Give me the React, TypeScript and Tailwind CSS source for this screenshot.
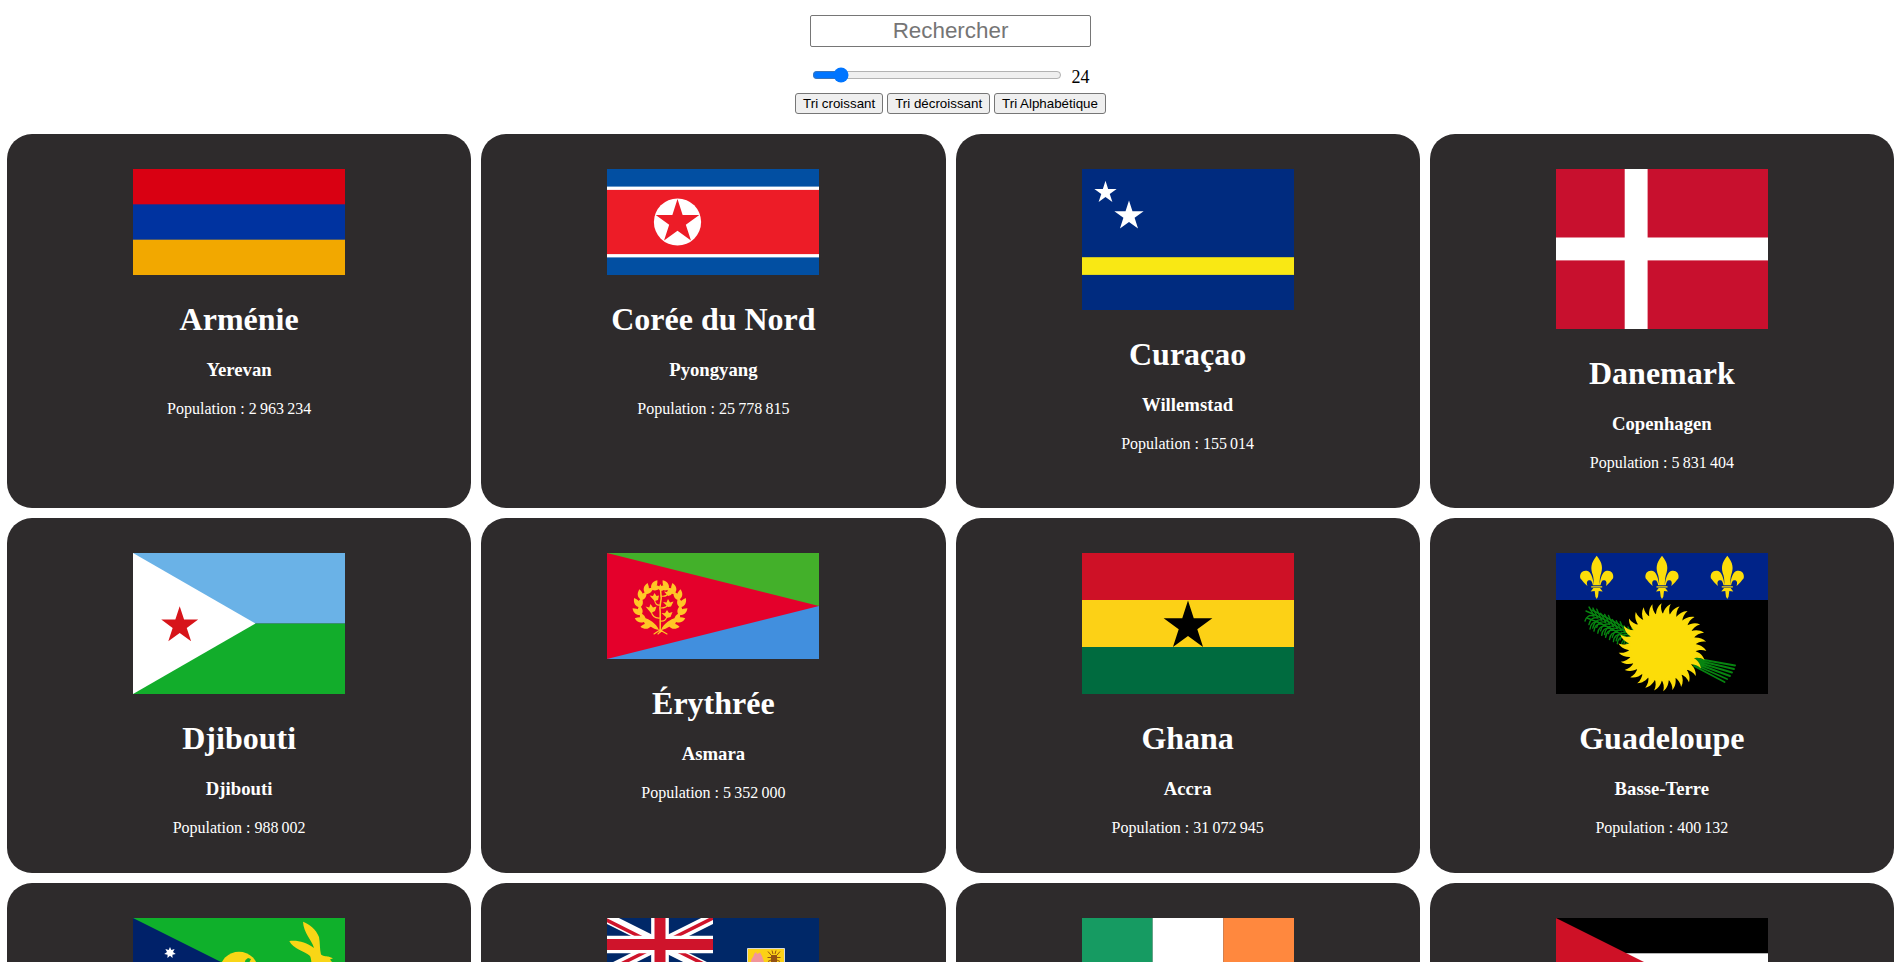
import { useState, type ReactNode } from "react";

function star(cx: number, cy: number, r: number, points = 5, inner = 0.382) {
  const out: string[] = [];
  for (let i = 0; i < points * 2; i++) {
    const a = (Math.PI * i) / points - Math.PI / 2;
    const d = i % 2 === 0 ? r : r * inner;
    out.push(`${(cx + d * Math.cos(a)).toFixed(2)},${(cy + d * Math.sin(a)).toFixed(2)}`);
  }
  return out.join(" ");
}

function Flag({ h, children }: { h: number; children: ReactNode }) {
  return (
    <svg className="block w-[212px] shrink-0" width={212} height={h} viewBox={`0 0 212 ${h}`}>
      {children}
    </svg>
  );
}

const Armenia = () => (
  <Flag h={106}>
    <rect width="212" height="106" fill="#d90012" />
    <rect y="35.33" width="212" height="70.67" fill="#0033a0" />
    <rect y="70.67" width="212" height="35.33" fill="#f2a800" />
  </Flag>
);

const NorthKorea = () => (
  <Flag h={106}>
    <rect width="212" height="106" fill="#024fa2" />
    <rect y="17.6" width="212" height="70.8" fill="#fff" />
    <rect y="20.9" width="212" height="64.2" fill="#ed1c27" />
    <circle cx="70.5" cy="53" r="23.6" fill="#fff" />
    <polygon points={star(70.5, 53, 22.9)} fill="#ed1c27" />
  </Flag>
);

const Curacao = () => (
  <Flag h={141}>
    <rect width="212" height="141" fill="#002b7f" />
    <rect y="88.2" width="212" height="17.7" fill="#f9e814" />
    <polygon points={star(23.5, 23.5, 11.7)} fill="#fff" />
    <polygon points={star(47, 47, 15.4)} fill="#fff" />
  </Flag>
);

const Denmark = () => (
  <Flag h={160}>
    <rect width="212" height="160" fill="#c8102e" />
    <rect x="68.7" width="22.9" height="160" fill="#fff" />
    <rect y="68.5" width="212" height="22.9" fill="#fff" />
  </Flag>
);

const Djibouti = () => (
  <Flag h={141}>
    <rect width="212" height="70.6" fill="#6ab2e7" />
    <rect y="70.6" width="212" height="70.4" fill="#12ad2b" />
    <polygon points="0,0 122.5,70.6 0,141" fill="#fff" />
    <polygon points={star(46.7, 72.6, 19.4)} fill="#d7141a" />
  </Flag>
);

const LEAF = "M0 1C-3.4 -1 -3.8 -5 -0.6 -10C3.4 -6.5 3.4 -2 0 1Z";

function Eritrea() {
  const leaves = [];
  for (let i = 0; i < 7; i++) {
    const t = 152 - i * 21.5;
    leaves.push(
      <g key={i} transform={`rotate(${180 + t}) translate(0 20.5)`}>
        <path d={LEAF} transform="rotate(128)" />
        <path d={LEAF} transform="rotate(80) scale(0.9)" />
      </g>,
    );
  }
  return (
    <Flag h={106}>
      <rect width="212" height="53" fill="#43b02a" />
      <rect y="53" width="212" height="53" fill="#418fde" />
      <polygon points="0,0 212,53 0,106" fill="#e4002b" />
      <g fill="#ffc726">
        <g transform="translate(53 54.5)">{leaves}</g>
        <g transform="translate(53 54.5) scale(-1 1)">{leaves}</g>
        <path d="M37.5 65C42 66 49 70 52 77C46 76 39 72 37.5 65ZM68.5 65C64 66 57 70 54 77C60 76 67 72 68.5 65Z" />
        <g fill="none" stroke="#ffc726" strokeLinecap="round" strokeWidth="1.1">
          <path d="M53.2 79V59C52 54 54 50 54.2 45L53.5 36" strokeWidth="1.5" />
          <path d="M53.2 65Q46 66 44 58M53.2 68Q59 69 60 63M53.2 52Q48 53 47.5 46M54 55Q60 55 61 51M54 43Q60 44 61 40M47 81L53 77L60 81M51 81L55 77" />
        </g>
        <path d="M44 60L38.5 53.5L42.2 54.5L43.5 51L46 54.5L49.5 53.5L48 58ZM60 65L54.5 60L58 60.2L60 57L62 60L65.5 59L63.5 64ZM47.5 48L42.6 42.5L46 43L47.5 40L49.5 43L52 42.5L51 47ZM61 54L56 49L59.5 49.5L61 46L63 49.5L66.5 48.5L64 53.5ZM61 43L57 38.5L60 39L61.5 36L63 39L66 38.5L64 42ZM53.5 38L49.5 34L52 34.3L53.3 31L55 34.2L57.3 34L56 37.5Z" />
      </g>
    </Flag>
  );
}

const Ghana = () => (
  <Flag h={141}>
    <rect width="212" height="47" fill="#ce1126" />
    <rect y="47" width="212" height="47" fill="#fcd116" />
    <rect y="94" width="212" height="47" fill="#006b3f" />
    <polygon points={star(106, 73.2, 25.6)} fill="#000" />
  </Flag>
);

const FLEUR =
  "M0 -21.5C-6 -14 -6.4 -9 -3.8 -2C-3 1 -3 4 -2.7 8H-3.8C-4.5 5 -5 3 -7 3C-9.5 3 -10.5 5 -9.3 8.6C-12.5 6 -14 4 -16.4 1C-17.5 -4 -14 -7.3 -10 -6.5C-5.5 -5.5 -4 0 -2.7 8H2.7C4 0 5.5 -5.5 10 -6.5C14 -7.3 17.5 -4 16.4 1C14 4 12.5 6 9.3 8.6C10.5 5 9.5 3 7 3C5 3 4.5 5 3.8 8H2.7C3 4 3 1 3.8 -2C6.4 -9 6 -14 0 -21.5Z";

function Guadeloupe() {
  const rays = Array.from({ length: 30 }, (_, i) => (
    <path
      key={i}
      d="M-4.2 -32C-3.8 -37 -2 -41.2 2.2 -44C0.8 -40 1.2 -36 3.4 -32Z"
      transform={`rotate(${i * 12 - 4})`}
    />
  ));
  const fronds = Array.from({ length: 12 }, (_, i) => {
    const x = 30 + i * 3.9;
    const y = 59 + i * 2.1;
    return (
      <path
        key={i}
        d={`M${x + 8} ${y + 4}Q${x + 5} ${y - 2} ${x + 3} ${y - 5 - (i % 3)}M${x + 8} ${y + 4}Q${x + 1} ${y + 2} ${x - 1} ${y + 9 + (i % 3) * 1.5}M${x + 12} ${y + 10}Q${x + 5} ${y + 9} ${x + 4} ${y + 17}`}
      />
    );
  });
  return (
    <Flag h={141}>
      <rect width="212" height="141" fill="#000" />
      <rect width="212" height="47" fill="#002388" />
      {[40.7, 106, 171.3].map((x) => (
        <g key={x} transform={`translate(${x} 24.3)`} fill="#fcdd09">
          <path d={FLEUR} />
          <path d="M-5.5 8.9H5.5V10.1H-5.5ZM-3.3 10.8H3.3L6 14.3L2 13.6L1.3 19.5L0 21.8L-1.3 19.5L-2 13.6L-6 14.3Z" />
        </g>
      ))}
      <g fill="none" stroke="#078410" strokeWidth="1.4" strokeLinecap="round">
        <path d="M30 58Q50 66 78 84M36 57Q54 66 78 80M31 65Q52 72 76 88" />
        {fronds}
        <path
          d="M137 105L179 112.5M137 106.5L178 116M137 108L176 119.5M137 109.5L174 123M137 111L171 126M138 113L168.5 129"
          strokeWidth="1.9"
        />
      </g>
      <g transform="translate(106.4 94.2)" fill="#fcdd09">
        <circle r="33.6" />
        {rays}
      </g>
    </Flag>
  );
}

const ChristmasIsland = () => (
  <Flag h={106}>
    <rect width="212" height="106" fill="#0fb02b" />
    <polygon points="0,0 212,106 0,106" fill="#002169" />
    <polygon points={star(37, 34.8, 5.9, 7, 0.52)} fill="#fff" />
    <circle cx="106" cy="53" r="19.3" fill="#f9d616" />
    <path d="M112.5 42L115 40L118 41L116.5 44L119 47L110 50Z" fill="#0fb02b" />
    <path
      d="M170 3.7C176 6 183 11 186 19C187.2 25 186.6 31 188 36.5C191 39 194 38 196 38.7L200 40.3L197 41.6L199 44L196 50H180C178 46 178.500 41 177 38C172 33 160 31 156.300 23C164 21.800 173 24 181 30C179 22 170.500 15 170 3.700Z"
      fill="#f9d616"
    />
  </Flag>
);

const TurksAndCaicos = () => (
  <Flag h={106}>
    <rect width="212" height="106" fill="#002868" />
    <svg width="106" height="53" viewBox="0 0 106 53">
      <path d="M0 0L106 53M106 0L0 53" stroke="#fff" strokeWidth="10.6" />
      <path d="M-2 1.3L51 27.8M106 0L53 26.5M53 26.5L0 53M55 25.2L108 51.7" stroke="#cf142b" strokeWidth="3.5" />
      <path d="M53 0V53M0 26.5H106" stroke="#fff" strokeWidth="17.7" />
      <path d="M53 0V53M0 26.5H106" stroke="#cf142b" strokeWidth="11" />
    </svg>
    <path d="M140.5 30.5H177.5V62Q175 76 159 82Q143 76 140.5 62Z" fill="#fcd116" stroke="#d5d8dc" />
    <path d="M144 44C144 40 147 39 147 36L149 34L150 36L153 34.5L155 38L157 44Z" fill="#f0959b" />
    <path d="M164 44V37H170V44Z" fill="#945312" />
    <path
      d="M164 37L161 33.5M170 37L173 33.5M166 36L165 32.5M168 36L169 32.5M164 39.5H160.5M170 39.5H173.5M164 42L161 43.5M170 42L173 43.5"
      stroke="#945312"
      strokeWidth="1"
    />
  </Flag>
);

const Ireland = () => (
  <Flag h={106}>
    <rect width="70.67" height="106" fill="#169b62" />
    <rect x="70.67" width="70.67" height="106" fill="#fff" />
    <rect x="141.33" width="70.67" height="106" fill="#ff883e" />
  </Flag>
);

const Jordan = () => (
  <Flag h={106}>
    <rect width="212" height="35.33" fill="#000" />
    <rect y="35.33" width="212" height="35.33" fill="#fff" />
    <rect y="70.67" width="212" height="35.33" fill="#007a3d" />
    <polygon points="0,0 106,53 0,106" fill="#ce1126" />
  </Flag>
);

const countries = [
  { name: "Arménie", capital: "Yerevan", population: 2963234, Picture: Armenia },
  { name: "Corée du Nord", capital: "Pyongyang", population: 25778815, Picture: NorthKorea },
  { name: "Curaçao", capital: "Willemstad", population: 155014, Picture: Curacao },
  { name: "Danemark", capital: "Copenhagen", population: 5831404, Picture: Denmark },
  { name: "Djibouti", capital: "Djibouti", population: 988002, Picture: Djibouti },
  { name: "Érythrée", capital: "Asmara", population: 5352000, Picture: Eritrea },
  { name: "Ghana", capital: "Accra", population: 31072945, Picture: Ghana },
  { name: "Guadeloupe", capital: "Basse-Terre", population: 400132, Picture: Guadeloupe },
];

const nextRow = [ChristmasIsland, TurksAndCaicos, Ireland, Jordan];

const sorts = ["Tri croissant", "Tri décroissant", "Tri Alphabétique"];

export default function App() {
  const [count, setCount] = useState(24);
  return (
    <div className="h-[962px] overflow-hidden bg-white font-['Liberation_Serif',serif] text-black">
      <header className="flex h-[134px] flex-col items-center pt-[15px]">
        <input
          type="text"
          placeholder="Rechercher"
          className="h-8 w-[281px] shrink-0 rounded-[2px] border border-[#767676] bg-white text-center font-['Liberation_Sans',sans-serif] text-[22.4px] outline-none placeholder:text-[#757575]"
        />
        <div className="mt-[17px] flex h-[25px] shrink-0 items-start">
          <input
            type="range"
            min={1}
            max={250}
            value={count}
            onChange={(e) => setCount(Number(e.target.value))}
            className="mt-[3px] h-4 w-[250px]"
          />
          <span className="ml-[10px] pt-px text-[18px] leading-[25px]">{count}</span>
        </div>
        <div className="mt-1 flex gap-1">
          {sorts.map((label) => (
            <button
              key={label}
              className="h-[21px] rounded-[3px] border border-[#767676] bg-[#efefef] px-[7px] font-['Liberation_Sans',sans-serif] text-[13.333px] leading-[19px] whitespace-nowrap"
            >
              {label}
            </button>
          ))}
        </div>
      </header>
      <main className="grid grid-cols-4 gap-[10px] px-[7px]">
        {countries.map(({ name, capital, population, Picture }) => (
          <article key={name} className="flex flex-col items-center rounded-[25px] bg-[#2e2b2c] pt-[35px] pb-[35px] text-white">
            <Picture />
            <h1 className="mt-[26px] text-[32px] leading-[37px] font-bold">{name}</h1>
            <h3 className="mt-[21px] text-[18.72px] leading-[21px] font-bold">{capital}</h3>
            <p className="mt-[19px] text-[16px] leading-[20px]">
              Population : {String(population).replace(/\B(?=(\d{3})+$)/g, "\u202f")}
            </p>
          </article>
        ))}
        {nextRow.map((Picture, i) => (
          <article key={i} className="flex h-[355px] flex-col items-center rounded-[25px] bg-[#2e2b2c] pt-[35px]">
            <Picture />
          </article>
        ))}
      </main>
    </div>
  );
}
